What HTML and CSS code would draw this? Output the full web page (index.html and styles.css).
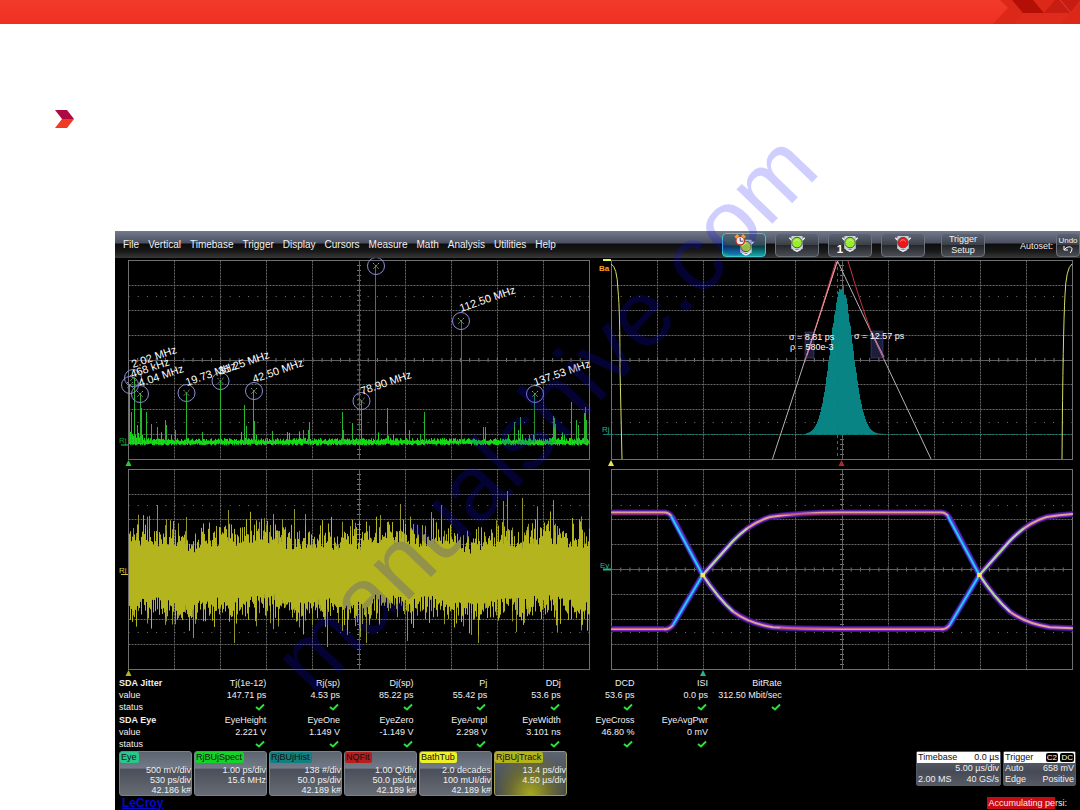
FILE: index.html
```html
<!DOCTYPE html>
<html lang="en">
<head>
<meta charset="utf-8">
<title>SDA Jitter and Eye</title>
<link rel="stylesheet" href="styles.css">
</head>
<body>
<header class="band">
<svg class="band-art" viewBox="990 0 90 24" aria-hidden="true">
<path d="M1000 0L1008 8L993 24H1080V0Z" fill="#db2819"/>
<path d="M1012 0H1033L1044 13H1023Z" fill="#b40f06"/>
<path d="M1044 13L1055 0H1080L1070 13Z" fill="#c61c11"/>
<path d="M1023 13H1070L1061 24H1013Z" fill="#df2b1c"/>
<path d="M1060 0L1071 13" stroke="#e34334" fill="none"/>
</svg>
</header>
<main class="content">
<svg class="bullet" viewBox="0 0 20 18" aria-hidden="true"><path d="M0 0H12L19 9H7Z" fill="#ad0a43"/><path d="M7 9H19L12 18H0Z" fill="#f03a22"/></svg>
<section class="scope">
<div class="toolbar">
<nav class="menu">
<button>File</button><button>Vertical</button><button>Timebase</button><button>Trigger</button><button>Display</button><button>Cursors</button><button>Measure</button><button>Math</button><button>Analysis</button><button>Utilities</button><button>Help</button>
</nav>
<div class="modes">
<button class="key active" aria-label="Auto"><svg viewBox="0 0 44 24"><use href="#lamp" x="2" y="4" fill="#b4e814"/><circle cx="18" cy="7" r="4.500" fill="#f4ece8" stroke="#b43434" stroke-width="1.5"/><path d="M13 4L16 1M23 4L20 1" stroke="#e8a23a" stroke-width="3"/><path d="M18 4V7.500H21" stroke="#333366" fill="none"/></svg></button>
<button class="key" aria-label="Normal"><svg viewBox="0 0 44 24"><use href="#lamp" fill="#98ee28"/></svg></button>
<button class="key" aria-label="Single"><svg viewBox="0 0 44 24"><use href="#lamp" fill="#98ee28"/><text x="8" y="20" class="one">1</text></svg></button>
<button class="key" aria-label="Stop"><svg viewBox="0 0 44 24"><use href="#lamp" fill="#f01414"/></svg></button>
<button class="key setup">Trigger Setup</button>
</div>
<span class="autoset">Autoset:</span>
<button class="key undo">Undo<svg viewBox="0 0 12 9"><path d="M2 1V5H6M2 5C5 1 10 1 10 4Q10 6 8 8" fill="none" stroke="#fff"/></svg></button>
</div>
<svg class="defs" aria-hidden="true"><defs>
<g id="lamp"><path d="M13 4H31L28 7V14L22 19L16 14V7Z" fill="#6c7880"/><path d="M14 4L17 7M30 4L27 7M18 16L22 18L26 16" stroke="#eef4f6" stroke-width="1.5" fill="none"/><rect x="16" y="2" width="12" height="14" rx="1" fill="#ccd2d8"/><circle cx="22" cy="9" r="5.500" stroke="#4a5056"/><path d="M19 8Q22 4 25 8" stroke="#fff" stroke-opacity=".5" fill="none"/></g>
<g id="crossing" fill="none">
<path id="eyeFall" d="M664 512.500Q669 512 673 518L702.700 575Q718 598 733 611.500Q748 623 773 627.300Q800 629 841 629"/>
<path id="eyeRise" d="M664 629Q669 630 673 625L702.700 575L733 541Q750 523 770 517Q800 512.500 841 512.500"/>
</g>
</defs></svg>
<div class="plots">
<svg class="plot" id="spectrum" viewBox="115 258 482 209">
<g class="grid" data-x="128.500" data-y="260.500" data-h="199"></g>
<g class="trace"></g>
<g class="peaks"></g>
<g class="labels"></g>
<text x="119" y="443" class="tag green">Rj</text><path d="M121 445H128" stroke="#14dc50"/>
<path d="M128.500 460L131.500 466H125.500Z" fill="#28c840"/>
</svg>
<svg class="plot" id="histogram" viewBox="597 258 483 209">
<g class="grid" data-x="611.500" data-y="260.500" data-h="199"></g>
<path d="M805 434.500H875M611.500 434.500H1072" stroke="#0b7d76" stroke-dasharray="2 2"/>
<g class="trace"></g>
<path d="M837.500 261V459" stroke="#4650c8" stroke-dasharray="3 3"/>
<g fill="none">
<path d="M772.500 459L837.500 261L931 459" stroke="#b4b4b4"/>
<path d="M806 359L836 261M848 261Q862 308 871 331L884 359" stroke="#c83246"/>
<path d="M807 355L837 262M871 331L884 357" stroke="#e6969e"/>
<path d="M611 264Q617 266 618 290Q620 310 620 370L622 459M1072 264Q1066 268 1065 295Q1063 330 1062 459" stroke="#d8dc64"/>
<path d="M603 260H611" stroke="#f0f064" stroke-width="2"/>
</g>
<g fill="#7878e6" fill-opacity=".25" stroke="#5a5ab4" stroke-opacity=".4"><rect x="805" y="332" width="9" height="26"/><rect x="871" y="331" width="12" height="27"/></g>
<g class="sigma"><text x="789" y="340">σ = 8.81 ps</text><text x="790" y="350">ρ = 580e-3</text><text x="854" y="339">σ = 12.57 ps</text></g>
<text x="599" y="271" class="tag orange">Ba</text><text x="602" y="432" class="tag teal">Rj</text><path d="M603 434.500H611" stroke="#0b8070"/>
<path d="M611 460L614 466H608Z" fill="#e6e650"/><path d="M841.500 460L844.500 466H838.500Z" fill="#b4282d"/>
</svg>
<svg class="plot" id="track" viewBox="115 467 482 209">
<g class="grid" data-x="128.500" data-y="469.500" data-h="200"></g>
<g class="trace"></g>
<text x="119" y="573" class="tag yellow">Rj</text><path d="M121 574.500H128" stroke="#c8c83c"/>
<path d="M128.500 670L131.500 676H125.500Z" fill="#b4b428"/>
</svg>
<svg class="plot" id="eye" viewBox="597 467 483 209">
<clipPath id="eyeClip"><rect x="611" y="469" width="462" height="201"/></clipPath>
<g class="grid" data-x="611.500" data-y="469.500" data-h="200"></g>
<g clip-path="url(#eyeClip)" fill="none" class="eye-trace">
<g stroke="#3b158c" stroke-width="6"><path d="M611 512.500H664M841 512.500H941M611 629H664M841 629H941"/><use href="#crossing"/><use href="#crossing" x="276.700"/></g>
<g stroke="#7026b8" stroke-width="4"><path d="M611 512.500H664M841 512.500H941M611 629H664M841 629H941"/><use href="#crossing"/><use href="#crossing" x="276.700"/></g>
<g stroke="#e0a090" stroke-width="2"><path d="M611 512.500H664M841 512.500H941M611 629H664M841 629H941"/><use href="#crossing"/><use href="#crossing" x="276.700"/></g>
<g stroke="#b02850"><path d="M611 514H664M780 514H941M611 628H664M780 628H941"/></g>
<g id="steep"><path d="M671 516L702.700 575L673 625" stroke="#3c3cd8" stroke-width="4"/><path d="M671 516L702.700 575L673 625" stroke="#28c8f0" stroke-width="2"/><path d="M747 528.500Q740 534 733 541L702.700 575Q718 598 733 611.500" stroke="#a8d89a" stroke-width="2"/><path d="M700.500 575H705" stroke="#ffe650" stroke-width="4"/></g>
<use href="#steep" x="276.700"/>
</g>
<text x="600" y="568" class="tag teal">Ey</text><path d="M603 569.500H611" stroke="#28b48c" stroke-width="2"/>
<path d="M703 670L706 676H700Z" fill="#28b48c"/>
</svg>
</div>
<table class="measure">
<tbody>
<tr><th scope="row">SDA Jitter</th><td>Tj(1e-12)</td><td>Rj(sp)</td><td>Dj(sp)</td><td>Pj</td><td>DDj</td><td>DCD</td><td>ISI</td><td>BitRate</td></tr>
<tr><th scope="row" class="sub">value</th><td>147.71 ps</td><td>4.53 ps</td><td>85.22 ps</td><td>55.42 ps</td><td>53.6 ps</td><td>53.6 ps</td><td>0.0 ps</td><td>312.50 Mbit/sec</td></tr>
<tr class="status" data-count="8"><th scope="row" class="sub">status</th></tr>
</tbody>
<tbody>
<tr><th scope="row">SDA Eye</th><td>EyeHeight</td><td>EyeOne</td><td>EyeZero</td><td>EyeAmpl</td><td>EyeWidth</td><td>EyeCross</td><td>EyeAvgPwr</td><td></td></tr>
<tr><th scope="row" class="sub">value</th><td>2.221 V</td><td>1.149 V</td><td>-1.149 V</td><td>2.298 V</td><td>3.101 ns</td><td>46.80 %</td><td>0 mV</td><td></td></tr>
<tr class="status" data-count="7"><th scope="row" class="sub">status</th></tr>
</tbody>
</table>
<div class="descriptors">
<button class="card"><b class="c-eye">Eye</b><span>500 mV/div</span><span>530 ps/div</span><span>42.186 k#</span></button>
<button class="card"><b class="c-spect">RjBUjSpect</b><span>1.00 ps/div</span><span>15.6 MHz</span></button>
<button class="card"><b class="c-hist">RjBUjHist</b><span>138 #/div</span><span>50.0 ps/div</span><span>42.189 k#</span></button>
<button class="card"><b class="c-fit">NQFit</b><span>1.00 Q/div</span><span>50.0 ps/div</span><span>42.189 k#</span></button>
<button class="card"><b class="c-bath">BathTub</b><span>2.0 decades</span><span>100 mUI/div</span><span>42.189 k#</span></button>
<button class="card chosen"><b class="c-track">RjBUjTrack</b><span>13.4 ps/div</span><span>4.50 µs/div</span></button>
<div class="info timebase"><div class="head"><span>Timebase</span><span>0.0 µs</span></div><div class="line"><span></span><span>5.00 µs/div</span></div><div class="line"><span>2.00 MS</span><span>40 GS/s</span></div></div>
<div class="info trigger"><div class="head"><span>Trigger</span><span><i>C2</i> <i>DC</i></span></div><div class="line"><span>Auto</span><span>658 mV</span></div><div class="line"><span>Edge</span><span>Positive</span></div></div>
</div>
<footer class="foot"><span class="brand">LeCroy</span><span class="message">Accumulating persi:</span></footer>
</section>
</main>
<div class="watermark">manualshive.com</div>
<script src="plots.js"></script>
</body>
</html>
```
FILE: styles.css
```css
* { box-sizing: border-box; }
body {
  margin: 0;
  min-height: 100vh;
  display: flex;
  flex-direction: column;
  position: relative;
  overflow: hidden;
  background: #fff;
  font-family: "Liberation Sans", Arial, sans-serif;
}
button { font: inherit; color: inherit; border: 0; background: none; padding: 0; }
.band { height: 24px; background: linear-gradient(#f23a2a, #ee3022); display: flex; justify-content: flex-end; }
.band-art { height: 24px; width: 90px; }
.content { flex: 1; display: flex; flex-direction: column; padding-top: 86px; }
.bullet { width: 20px; height: 18px; margin-left: 55px; }
.scope {
  flex: 1;
  margin: 103px 0 0 115px;
  background: #000;
  color: #f0f0f0;
  font-size: 9px;
  line-height: 12px;
  display: flex;
  flex-direction: column;
}
.defs { position: absolute; width: 0; height: 0; }

.toolbar {
  height: 27px;
  display: flex;
  align-items: center;
  background: linear-gradient(#727a8c 0, #4a5060 12px, #0c0c0e 13px, #181818 20px, #383838 27px);
}
.menu { display: flex; gap: 9px; padding-left: 8px; font-size: 10px; flex: 1; white-space: nowrap; }
.modes { display: flex; gap: 9px; }
.key {
  width: 44px;
  height: 24px;
  border: 1px solid #6c727c;
  border-radius: 4px;
  background: linear-gradient(#5c6474, #3c4048 48%, #25272b 52%, #4a4d54);
  line-height: 11px;
}
.key svg { display: block; width: 100%; }
.key.active { border-color: #3cc8cc; background: linear-gradient(#566474, #344c58 48%, #0a3c44 56%, #14a8ae); }
.key.setup { margin-left: 7px; }
.one { font: bold 12px "Liberation Sans", sans-serif; fill: #fff; }
.autoset { margin: 3px 3px 0 35px; }
.key.undo { width: 24px; font-size: 8px; line-height: 9px; }
.key.undo svg { width: 12px; height: 9px; margin: 0 auto; }

.plots { display: grid; grid-template-columns: 482fr 483fr; }
.plot { display: block; width: 100%; height: auto; }
.tag { font-size: 8px; }
.green { fill: #14a030; }
.teal { fill: #28b48c; }
.orange { fill: #ffa028; font-weight: bold; }
.yellow { fill: #d2d250; }
.sigma { font-size: 9px; fill: #fff; }
.labels { font-size: 11px; fill: #fff; }

.measure {
  width: 69%;
  margin: 1px 0 0 4px;
  padding-right: 3px;
  border-spacing: 0;
  table-layout: fixed;
}
.measure th, .measure td { padding: 0; height: 12px; text-align: right; white-space: nowrap; }
.measure th { text-align: left; font-weight: bold; }
.measure th.sub { font-weight: normal; }
.measure tbody + tbody tr:first-child > * { padding-top: 1px; }
.measure svg { display: block; width: 10px; height: 8px; margin: 2px 1px 2px auto; }

.descriptors { display: flex; align-items: flex-start; gap: 2px; padding: 1px 4px 0 4px; }
.card {
  flex: 0 0 73px;
  height: 45px;
  border: 1px solid #7c828c;
  border-radius: 3px;
  background: linear-gradient(#5c6470, #747b88 38%, #4a4e58 39%, #666b74);
  display: grid;
  grid-template-rows: 12px;
  grid-auto-rows: 10px;
  line-height: 10px;
  text-align: right;
}
.card b { justify-self: start; font-weight: normal; color: #101010; line-height: 11px; height: 11px; padding: 0 2px 0 1px; border-radius: 2px; }
.card span { padding-top: 1px; }
.chosen { border-color: #a0a050; background: radial-gradient(ellipse at 50% 100%, #a8a820, #6c6c34 40%, rgba(70, 76, 70, 0) 75%), linear-gradient(#5c6470, #404550); }
.c-eye { background: #28c88c; }
.c-spect { background: #14d228; }
.c-hist { background: #128080; }
.c-fit { background: #b41e1e; }
.c-bath { background: #f0f028; }
.c-track { background: #b4b41e; }
.info { border: 1px solid #555a64; border-radius: 2px; background: linear-gradient(#626876, #464a54 60%, #555a64); line-height: 11px; }
.timebase { width: 85px; margin-left: auto; }
.trigger { width: 73px; }
.head, .line { display: flex; justify-content: space-between; padding: 0 1px; }
.head { background: #fff; color: #101010; }
.head i { font-style: normal; background: #000; color: #fff; font-size: 8px; padding: 0 1px; border-radius: 2px; }
.foot { display: flex; justify-content: space-between; align-items: center; padding: 0 12px 0 7px; height: 13px; }
.brand { font-size: 12px; font-weight: bold; color: #0808c8; text-decoration: underline; }
.message { background: linear-gradient(90deg, #c80a14 84%, #000 84%); padding: 0 1px; }
.watermark {
  position: absolute;
  left: 50.5%;
  top: 51%;
  transform: translate(-50%, -50%) rotate(-46deg);
  font-size: 94px;
  line-height: 1;
  color: rgba(16, 8, 255, .2);
  pointer-events: none;
}
```
FILE: plots.js
```js
const NS = "http://www.w3.org/2000/svg";
let seed = 71;
function rnd() {
  seed = (seed * 1664525 + 1013904223) % 4294967296;
  return seed / 4294967296;
}
function add(parent, name, attrs, text) {
  const node = document.createElementNS(NS, name);
  for (const key in attrs) node.setAttribute(key, attrs[key]);
  if (text) node.textContent = text;
  parent.appendChild(node);
  return node;
}

// Graticules: ten by eight divisions with a ticked centre cross
document.querySelectorAll(".grid").forEach(g => {
  const x = +g.dataset.x, y = +g.dataset.y, h = +g.dataset.h, w = 461;
  let dashed = "", ticks = "";
  for (let i = 1; i < 10; i++) if (i !== 5) dashed += `M${Math.floor(x + i * w / 10) + .5} ${y}v${h}`;
  for (let i = 1; i < 8; i++) if (i !== 4) dashed += `M${x} ${Math.floor(y + i * h / 8) + .5}h${w}`;
  add(g, "path", { d: dashed, stroke: "#686868", "stroke-dasharray": "2 1", fill: "none" });
  for (let i = 1; i < 50; i++) ticks += `M${x + i * w / 50} ${y + h / 2 - 2}v4`;
  for (let i = 1; i < 40; i++) ticks += `M${x + w / 2 - 2} ${y + i * h / 40}h4`;
  add(g, "path", { d: ticks, stroke: "#777" });
  add(g, "path", { d: `M${x} ${Math.floor(y + h / 2) + .5}h${w}M${Math.floor(x + w / 2) + .5} ${y}v${h}`, stroke: "#606060" });
  add(g, "path", { d: `M${x} ${y + 36}h${w}M${x} ${y + h - 37}h${w}`, stroke: "#777", "stroke-dasharray": "1 8.2" });
  add(g, "rect", { x: x, y: y, width: w, height: h, fill: "none", stroke: "#707070" });
});

// Jitter spectrum
const spectrum = document.querySelector("#spectrum .trace");
let floor = "";
for (let x = 129; x < 590; x++) {
  const near = x < 150 ? (150 - x) / 2 : 0;
  const top = 441 - rnd() * 3 - rnd() * near - (rnd() > .96 ? rnd() * 8 : 0);
  floor += `M${x + .5} ${top}V${443.5 + rnd() * 2}`;
}
const spikes = [[129,384],[131,412],[134,378],[137,425],[140,394],[141,408],[146,412],[151,424],[157,427],[165,420],[166,425],[175,430],[186,393],[202,432],[220,381],[244,405],[246,426],[253,391],[254,421],[272,431],[303,430],[309,422],[308,430],[342,412],[343,430],[352,423],[361,401],[387,408],[405,422],[409,430],[420,434],[424,412],[483,427],[485,427],[514,422],[518,430],[520,417],[553,416],[554,418],[555,424],[571,402],[576,420],[578,425],[584,413],[585,407],[586,420],[589,404]];
add(spectrum, "path", { d: floor, stroke: "#14dc14" });
add(spectrum, "path", { d: spikes.map(p => `M${p[0] + .5} ${p[1]}V443`).join(""), stroke: "#28b42c" });
add(spectrum, "path", { d: "M375.500 266V443M461.500 321V443M534.500 394V443", stroke: "#288c32" });
const peaks = document.querySelector("#spectrum .peaks");
[[130,385],[133,378],[140,394],[186.5,393],[220.5,381],[254,391],[361.5,401],[376,266],[461,321],[535,394]].forEach(([x, y]) => {
  add(peaks, "circle", { cx: x, cy: y, r: 8.5, fill: "none", stroke: "#8c8cd2" });
  add(peaks, "path", { d: `M${x - 3} ${y - 3}l6 6m0 -6l-6 6`, stroke: "#78a078", "stroke-dasharray": "2 1" });
});
const labels = document.querySelector("#spectrum .labels");
[[133,368,"2.02 MHz"],[132,378,"468 kHz"],[140,387,"4.04 MHz"],[187,386,"19.73 MHz"],[220,375,"31.25 MHz"],[254,383,"42.50 MHz"],[362,395,"78.90 MHz"],[461,312,"112.50 MHz"],[535,386,"137.53 MHz"]].forEach(([x, y, t]) => {
  add(labels, "text", { transform: `translate(${x} ${y}) rotate(-19)` }, t);
});

// Jitter histogram
let bars = "";
for (let x = 806; x < 884; x++) {
  const s = x < 841 ? 10.8 : 11.2;
  const h = 148 * Math.exp(-Math.pow((x - 841) / s, 2) / 2);
  bars += `M${x + .5} 434V${434 - h * (.97 + rnd() * .05)}`;
}
add(document.querySelector("#histogram .trace"), "path", { d: bars, stroke: "#088484" });

// Jitter track
let noise = "", fine = "";
for (let x = 129; x < 590; x++) {
  const wave = Math.sin(x / 9) * 2 + Math.sin(x / 23) * 3;
  const top = 549 + wave - rnd() * 15 - Math.pow(rnd(), 3) * 22;
  const low = 597 + wave + rnd() * 15 + Math.pow(rnd(), 3) * 22;
  noise += `M${x + .5} ${top}V${low}`;
  if (rnd() > .85) fine += `M${x + .5} ${top - rnd() * 14}V${low + rnd() * 12}`;
}
[[157,505],[186,517],[228,510],[294,509],[380,515],[400,504],[441,505],[503,501],[507,491],[522,498],[553,500]].forEach(p => fine += `M${p[0] + .5} ${p[1]}V575`);
[[193,638],[234,643],[327,647],[366,643],[407,641],[471,635],[516,632]].forEach(p => fine += `M${p[0] + .5} 575V${p[1]}`);
const track = document.querySelector("#track .trace");
add(track, "path", { d: fine, stroke: "#94942c" });
add(track, "path", { d: noise, stroke: "#b4b41e" });

// Status ticks
document.querySelectorAll(".status").forEach(row => {
  for (let i = 0; i < 8; i++) {
    const cell = document.createElement("td");
    if (i < +row.dataset.count) {
      const svg = add(cell, "svg", { viewBox: "0 0 10 8", role: "img", "aria-label": "ok" });
      add(svg, "path", { d: "M1 4L4 6.500L9 1.500", fill: "none", stroke: "#2ce03c", "stroke-width": 2 });
    }
    row.appendChild(cell);
  }
});
```
